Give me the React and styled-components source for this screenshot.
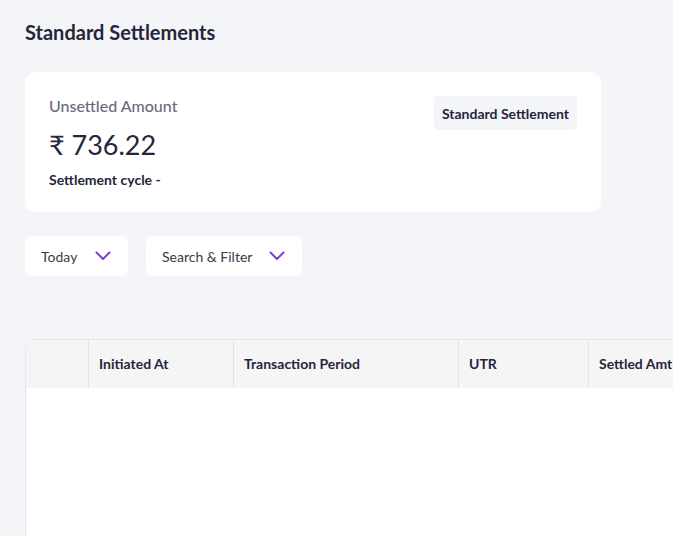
import React from "react";
import styled, { createGlobalStyle } from "styled-components";

const GlobalStyle = createGlobalStyle`
  body {
    margin: 0;
    background: #f4f5f8;
    font-family: Lato, "Open Sans", "DejaVu Sans", sans-serif;
    color: #25263a;
  }
`;

const Page = styled.div`
  padding: 20px 0 0 25px;
  height: 536px;
  box-sizing: border-box;
  overflow: hidden;
`;

const Title = styled.h1`
  margin: 0;
  font-size: 20px;
  font-weight: 700;
  line-height: 24px;
  color: #25263a;
`;

const Card = styled.div`
  margin-top: 28px;
  width: 576px;
  box-sizing: border-box;
  background: #fff;
  border-radius: 10px;
  padding: 24px;
  display: flex;
  justify-content: space-between;
  align-items: flex-start;
  height: 140px;
`;

const Label = styled.div`
  font-size: 16px;
  line-height: 20px;
  color: #6c6b7d;
  font-weight: 500;
`;

const Amount = styled.div`
  margin-top: 12px;
  font-size: 27px;
  line-height: 34px;
  color: #25263a;
  font-weight: 400;
`;

const Cycle = styled.div`
  margin-top: 9px;
  font-size: 14px;
  line-height: 18px;
  font-weight: 700;
  color: #25263a;
`;

const Badge = styled.div`
  background: #f4f5f8;
  border-radius: 4px;
  padding: 0 8px;
  height: 34px;
  display: flex;
  align-items: center;
  font-size: 14px;
  font-weight: 700;
  color: #25263a;
`;

const Filters = styled.div`
  margin-top: 24px;
  display: flex;
  gap: 18px;
`;

const Dropdown = styled.button`
  height: 40px;
  width: ${(p) => p.$w}px;
  box-sizing: border-box;
  border: none;
  border-radius: 6px;
  background: #fff;
  padding: 0 17px 0 16px;
  display: flex;
  align-items: center;
  justify-content: space-between;
  font-family: inherit;
  font-size: 14px;
  color: #3b3a48;
  cursor: pointer;
`;

const TableWrap = styled.div`
  margin-top: 63px;
  width: 800px;
  height: 300px;
  background: #fff;
  border: 1px solid #e6e6ea;
  border-radius: 10px 0 0 0;
  overflow: hidden;
`;

const HeadRow = styled.div`
  display: grid;
  grid-template-columns: 62px 145px 225px 130px 1fr;
  height: 48px;
  background: #f5f5f6;
`;

const HeadCell = styled.div`
  display: flex;
  align-items: center;
  padding: 0 0 1px 10px;
  font-size: 14px;
  font-weight: 700;
  color: #25263a;
  border-left: ${(p) => (p.$first ? "none" : "1px solid #e3e3e6")};
`;

const Chevron = () => (
  <svg width="16" height="10" viewBox="0 0 16 10" fill="none">
    <polyline
      points="1.5,1.5 8,8 14.5,1.5"
      stroke="#7b3fd4"
      strokeWidth="2"
      strokeLinecap="round"
      strokeLinejoin="round"
    />
  </svg>
);

const columns = ["", "Initiated At", "Transaction Period", "UTR", "Settled Amt"];

export default function App() {
  return (
    <Page>
      <GlobalStyle />
      <Title>Standard Settlements</Title>
      <Card>
        <div>
          <Label>Unsettled Amount</Label>
          <Amount>₹ 736.22</Amount>
          <Cycle>Settlement cycle -</Cycle>
        </div>
        <Badge>Standard Settlement</Badge>
      </Card>
      <Filters>
        <Dropdown $w={103}>
          Today <Chevron />
        </Dropdown>
        <Dropdown $w={156}>
          Search &amp; Filter <Chevron />
        </Dropdown>
      </Filters>
      <TableWrap>
        <HeadRow>
          {columns.map((c, i) => (
            <HeadCell key={i} $first={i === 0}>
              {c}
            </HeadCell>
          ))}
        </HeadRow>
      </TableWrap>
    </Page>
  );
}
